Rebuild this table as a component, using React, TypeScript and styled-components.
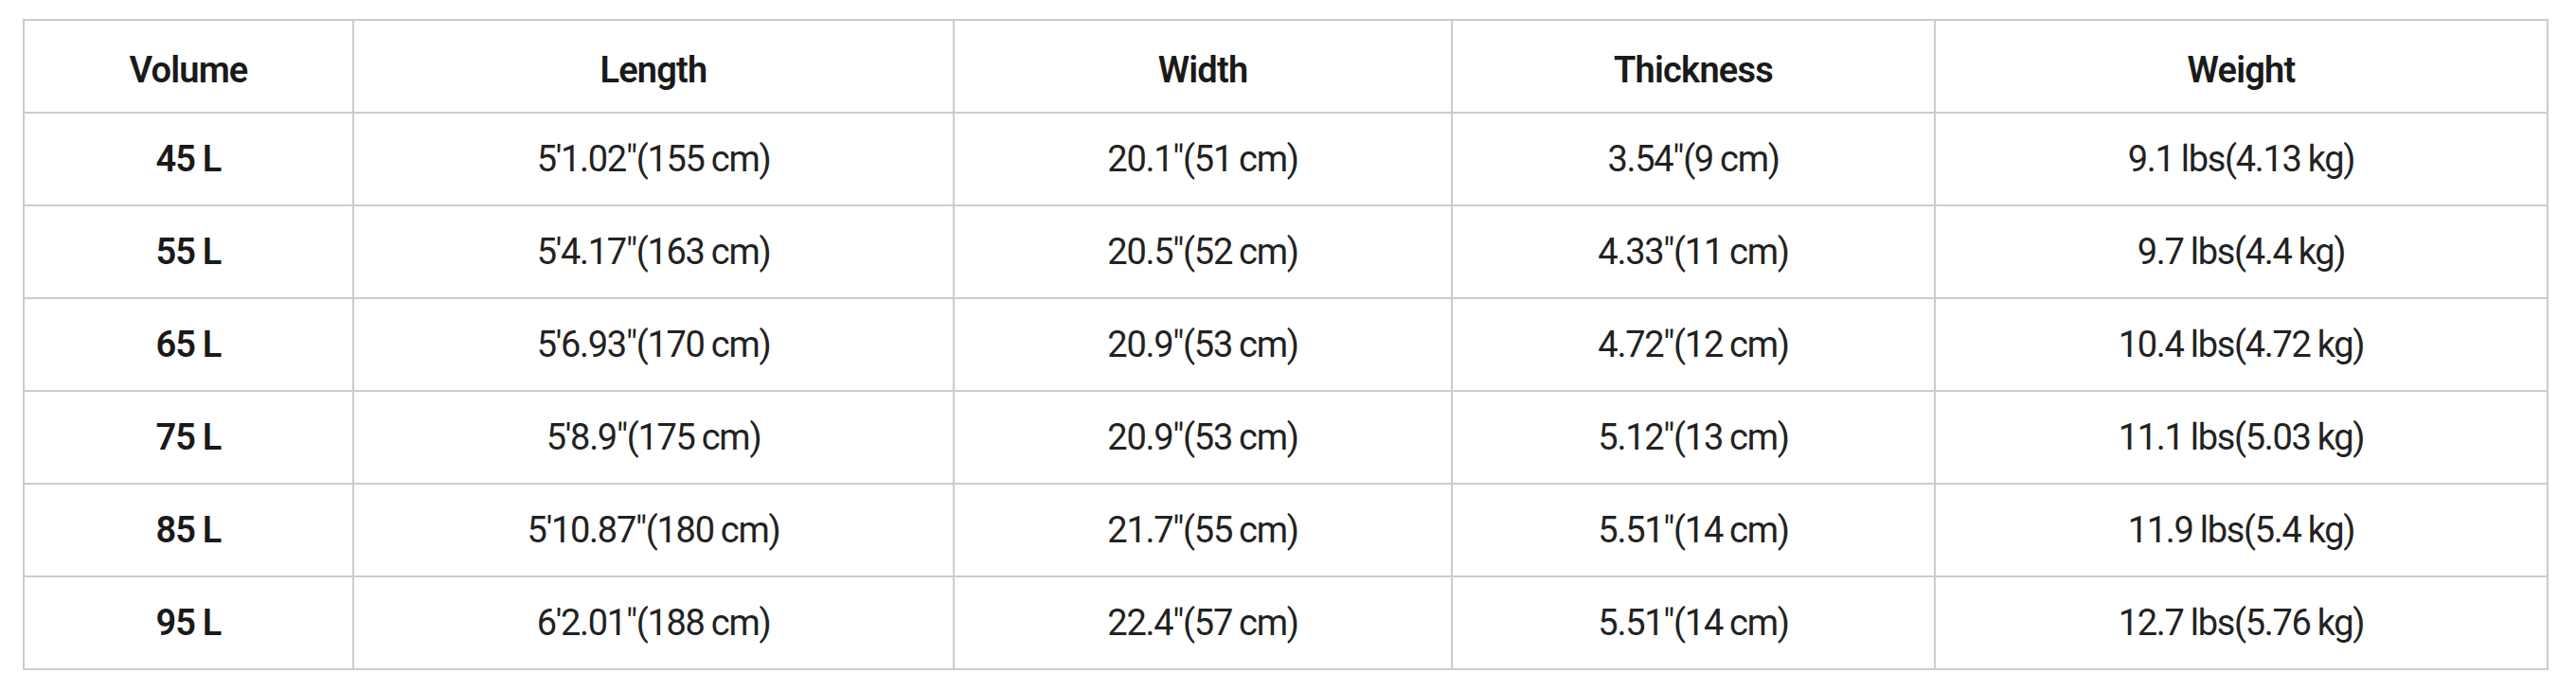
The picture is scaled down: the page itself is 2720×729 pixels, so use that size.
import React from "react";
import styled, { createGlobalStyle } from "styled-components";

const GlobalStyle = createGlobalStyle`
  html, body {
    margin: 0;
    padding: 0;
    background: #ffffff;
  }
  body {
    font-family: Roboto, "Liberation Sans", Arial, sans-serif;
  }
`;

const Page = styled.div`
  padding: 20px 0 0 24px;
  background: #ffffff;
`;

const Table = styled.table`
  table-layout: fixed;
  width: 2667px;
  border-collapse: separate;
  border-spacing: 2px;
  background: #cccccc;
`;

const Row = styled.tr`
  height: 96px;
`;

const HeadCell = styled.th`
  background: #ffffff;
  padding: 7px 0 0 0;
  text-align: center;
  vertical-align: middle;
  font-family: Roboto, "Liberation Sans", Arial, sans-serif;
  font-size: 38px;
  font-weight: 600;
  letter-spacing: -0.8px;
  color: #1a1a1a;
  white-space: nowrap;
`;

const Cell = styled.td<{ $bold?: boolean }>`
  background: #ffffff;
  padding: 0;
  text-align: center;
  vertical-align: middle;
  font-family: Roboto, "Liberation Sans", Arial, sans-serif;
  font-size: 38px;
  font-weight: ${(p) => (p.$bold ? 600 : 400)};
  letter-spacing: ${(p) => (p.$bold ? "-0.8px" : "-1.3px")};
  word-spacing: -1px;
  color: ${(p) => (p.$bold ? "#1a1a1a" : "#222222")};
  white-space: nowrap;
`;

const columns = [346, 632, 524, 508, 645];
const headers = ["Volume", "Length", "Width", "Thickness", "Weight"];

const rows: string[][] = [
  ["45 L", `5'1.02"(155 cm)`, `20.1"(51 cm)`, `3.54"(9 cm)`, "9.1 lbs(4.13 kg)"],
  ["55 L", `5'4.17"(163 cm)`, `20.5"(52 cm)`, `4.33"(11 cm)`, "9.7 lbs(4.4 kg)"],
  ["65 L", `5'6.93"(170 cm)`, `20.9"(53 cm)`, `4.72"(12 cm)`, "10.4 lbs(4.72 kg)"],
  ["75 L", `5'8.9"(175 cm)`, `20.9"(53 cm)`, `5.12"(13 cm)`, "11.1 lbs(5.03 kg)"],
  ["85 L", `5'10.87"(180 cm)`, `21.7"(55 cm)`, `5.51"(14 cm)`, "11.9 lbs(5.4 kg)"],
  ["95 L", `6'2.01"(188 cm)`, `22.4"(57 cm)`, `5.51"(14 cm)`, "12.7 lbs(5.76 kg)"],
];

export default function App() {
  return (
    <>
      <GlobalStyle />
      <Page>
        <Table>
          <colgroup>
            {columns.map((w, i) => (
              <col key={i} style={{ width: w }} />
            ))}
          </colgroup>
          <thead>
            <Row>
              {headers.map((h) => (
                <HeadCell key={h}>{h}</HeadCell>
              ))}
            </Row>
          </thead>
          <tbody>
            {rows.map((r) => (
              <Row key={r[0]}>
                {r.map((c, i) => (
                  <Cell key={i} $bold={i === 0}>
                    {c}
                  </Cell>
                ))}
              </Row>
            ))}
          </tbody>
        </Table>
      </Page>
    </>
  );
}
